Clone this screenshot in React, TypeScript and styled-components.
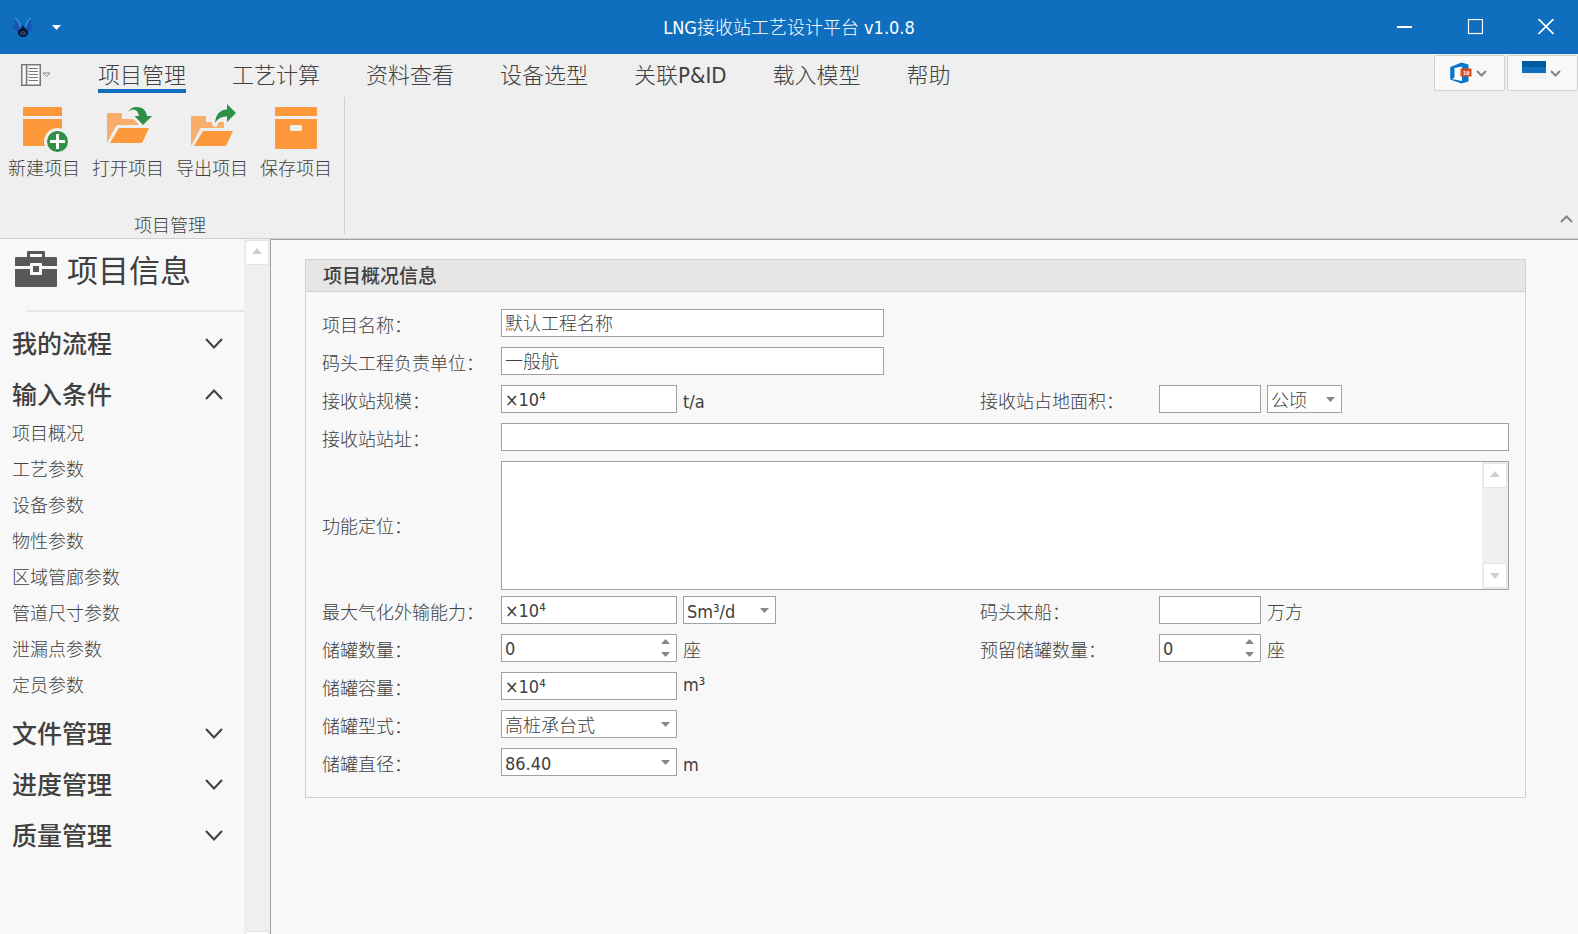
import React, { useState } from "react";
import styled, { createGlobalStyle } from "styled-components";

const color = {
  brand: "#106ebe",
  brandDark: "#005a9e",
  ribbon: "#efefef",
  page: "#f8f8f8",
  line: "#d0d0d0",
  soft: "#e4e4e4",
  field: "#a0a0a0",
  text: "#404040",
  glyph: "#858585",
  orange: "#fd983a",
  paleOrange: "#f8ae6b",
  green: "#2f8f46",
};

const GlobalStyle = createGlobalStyle`
  *, *::before, *::after { box-sizing: border-box; }
  body {
    margin: 0;
    background: ${color.page};
    color: ${color.text};
    font: 300 18px/26px "DejaVu Sans Condensed", "Noto Sans CJK SC", sans-serif;
  }
  button, input, select, textarea { font: inherit; color: inherit; }
  button { padding: 0; border: 0; background: none; cursor: pointer; }
  svg { display: block; flex: none; }
`;

const Window = styled.div`
  display: flex;
  flex-direction: column;
  height: 100vh;
  overflow: hidden;
`;

/* ---------- title bar ---------- */

const TitleBar = styled.header`
  display: grid;
  grid-template-columns: 1fr auto 1fr;
  align-items: center;
  height: 54px;
  flex: none;
  background: ${color.brand};
  color: #fff;
`;

const QuickAccess = styled.div`
  display: flex;
  align-items: center;
  gap: 18px;
  padding-left: 12px;
`;

const WindowTitle = styled.h1`
  margin: 0;
  padding-top: 2px;
  font: inherit;
`;

const WindowButtons = styled.div`
  display: flex;
  justify-content: flex-end;
  gap: 7px;
`;

const WindowButton = styled.button`
  display: grid;
  place-items: center;
  width: 64px;
  height: 54px;
`;

/* ---------- ribbon ---------- */

const Ribbon = styled.section`
  flex: none;
  background: ${color.ribbon};
  border-bottom: 1px solid ${color.line};
`;

const TabRow = styled.div`
  display: flex;
  align-items: flex-start;
  height: 43px;
`;

const FileButton = styled.button`
  display: flex;
  align-items: center;
  gap: 1px;
  height: 42px;
  width: 98px;
  padding-left: 21px;
`;

const Tabs = styled.nav`
  display: flex;
  flex: 1;
  gap: 46px;
`;

const Tab = styled.button<{ $active?: boolean }>`
  height: 39px;
  font-size: 22px;
  line-height: 30px;
  padding-top: 7px;
  display: flex;
  align-items: flex-start;
  border-bottom: 4px solid ${(p) => (p.$active ? color.brand : "transparent")};
`;

const ThemeButtons = styled.div`
  display: flex;
  gap: 2px;
  padding-top: 1px;
`;

const ThemeButton = styled.button`
  display: flex;
  align-items: center;
  justify-content: center;
  gap: 4px;
  width: 71px;
  height: 36px;
  padding-right: 2px;
  border: 1px solid ${color.line};
  border-radius: 2px;
  background: ${color.page};
`;

const RibbonBody = styled.div`
  display: flex;
  justify-content: space-between;
  align-items: flex-end;
  height: 141px;
`;

const RibbonGroup = styled.div`
  display: flex;
  flex-direction: column;
  justify-content: space-between;
  align-self: flex-start;
  height: 137px;
  padding: 7px 6px 0 2px;
  border-right: 1px solid ${color.line};
`;

const Commands = styled.div`
  display: flex;
`;

const Command = styled.button`
  display: flex;
  flex-direction: column;
  align-items: center;
  gap: 4px;
  width: 84px;
`;

const GroupCaption = styled.div`
  text-align: center;
  line-height: 16px;
`;

const CollapseButton = styled.button`
  padding: 0 5px 15px;
`;

/* ---------- body ---------- */

const Body = styled.div`
  display: flex;
  flex: 1;
  min-height: 0;
`;

const Sidebar = styled.aside`
  display: flex;
  width: 270px;
  flex: none;
  overflow: hidden;
`;

const SidebarContent = styled.div`
  flex: 1;
`;

const SidebarHeading = styled.div`
  display: flex;
  align-items: center;
  gap: 10px;
  height: 60px;
  padding-left: 15px;
`;

const SidebarTitle = styled.h2`
  margin: 0;
  padding-top: 4px;
  font-size: 31px;
  line-height: 40px;
  font-weight: 400;
`;

const Divider = styled.hr`
  margin: 11px 0 7px 27px;
  border: 0;
  border-top: 2px solid ${color.soft};
`;

const NavGroup = styled.button`
  display: flex;
  align-items: center;
  justify-content: space-between;
  width: 100%;
  height: 51px;
  padding: 0 21px 0 12px;
  font-size: 25px;
  font-weight: 500;

  svg {
    margin-bottom: 2px;
  }
`;

const NavList = styled.ul`
  margin: 0;
  padding: 0 0 0 12px;
  list-style: none;
`;

const NavItem = styled.li`
  height: 36px;
`;

const NavLink = styled.a`
  color: inherit;
  text-decoration: none;
`;

const ScrollTrack = styled.div<{ $overflow?: boolean }>`
  display: flex;
  flex-direction: column;
  justify-content: space-between;
  flex: none;
  width: 26px;
  padding: 1px;
  background: ${color.ribbon};
  margin-bottom: ${(p) => (p.$overflow ? "-23px" : "0")};
`;

const ScrollButton = styled.button<{ $up?: boolean }>`
  display: grid;
  place-items: center;
  width: 24px;
  height: 25px;
  padding-bottom: ${(p) => (p.$up ? "3px" : "0")};
  border: 1px solid ${color.soft};
  background: #fff;
`;

const Main = styled.main`
  flex: 1;
  min-width: 0;
  padding: 19px 52px 0 34px;
  border: solid ${color.field};
  border-width: 1px 0 0 1px;
`;

const Panel = styled.section`
  border: 1px solid ${color.line};
`;

const PanelTitle = styled.h3`
  margin: 0;
  height: 32px;
  padding: 1px 0 0 17px;
  font-size: 19px;
  line-height: 30px;
  font-weight: 500;
  background: #e6e6e6;
  border-bottom: 1px solid ${color.line};
`;

const Form = styled.form`
  display: grid;
  grid-template-columns: 179px minmax(0, 479fr) 179px minmax(0, 350fr);
  row-gap: 10px;
  padding: 17px 16px 21px;
`;

const Label = styled.label<{ $center?: boolean }>`
  grid-column-start: ${(p) => (p.$center ? 1 : "auto")};
  align-self: ${(p) => (p.$center ? "center" : "start")};
  padding-top: 6px;
  line-height: 22px;
  white-space: nowrap;
`;

const Field = styled.div<{ $span?: boolean }>`
  display: flex;
  gap: 6px;
  grid-column-end: ${(p) => (p.$span ? "-1" : "auto")};
  grid-column-start: ${(p) => (p.$span ? "2" : "auto")};
`;

const Box = styled.div<{ $w?: number }>`
  display: flex;
  flex: ${(p) => (p.$w ? "none" : "1")};
  width: ${(p) => (p.$w ? `${p.$w}px` : "auto")};
  height: 28px;
  position: relative;
  background: #fff;
  border: 1px solid ${color.field};
`;

const TextInput = styled.input`
  flex: 1;
  min-width: 0;
  width: 100%;
  padding: 2px 3px 0;
  border: 0;
  outline: 0;
  background: none;
`;

const SelectInput = styled.select`
  appearance: none;
  flex: 1;
  width: 100%;
  padding: 2px 22px 0 3px;
  border: 0;
  outline: 0;
  background: none;
`;

const SelectArrow = styled.span`
  position: absolute;
  right: 6px;
  top: 11px;
  pointer-events: none;
`;

const Spinner = styled.div`
  display: flex;
  flex-direction: column;
  justify-content: center;
  gap: 8px;
  padding-right: 6px;
`;

const SpinButton = styled.button`
  display: block;
`;

const Unit = styled.span<{ $raised?: boolean }>`
  padding-top: ${(p) => (p.$raised ? "2px" : "6px")};
  line-height: 22px;
`;

const MemoBox = styled.div`
  display: flex;
  flex: 1;
  height: 129px;
  margin-bottom: -4px;
  background: #fff;
  border: 1px solid ${color.field};
`;

const Memo = styled.textarea`
  flex: 1;
  padding: 1px 3px;
  border: 0;
  outline: 0;
  resize: none;
  overflow: hidden;
  background: none;
`;

/* ---------- drawings ---------- */

const Triangle = ({ up, w = 9, h = 5, fill = color.glyph }: { up?: boolean; w?: number; h?: number; fill?: string }) => (
  <svg width={w} height={h} viewBox="0 0 10 5" preserveAspectRatio="none" aria-hidden="true">
    <path d={up ? "M0 5L5 0L10 5Z" : "M0 0H10L5 5Z"} fill={fill} />
  </svg>
);

const Chevron = ({ up, w, h, sw, stroke }: { up?: boolean; w: number; h: number; sw: number; stroke: string }) => (
  <svg width={w} height={h} viewBox={`0 0 ${w} ${h}`} fill="none" stroke={stroke} strokeWidth={sw} aria-hidden="true">
    <path d={up ? `M1 ${h - 1}L${w / 2} 1.5L${w - 1} ${h - 1}` : `M1 1L${w / 2} ${h - 1.5}L${w - 1} 1`} />
  </svg>
);

const Logo = () => (
  <svg width="22" height="22" viewBox="0 0 22 22" aria-hidden="true">
    <path d="M2.500 1Q7 4 8 11L6.500 16Q4 16 3.500 14L1 12Q4 7 2.500 1Z" fill="#1b55b4" />
    <path d="M19.500 1Q15 4 14 11L15.500 16Q18 16 18.500 14L21 12Q18 7 19.500 1Z" fill="#1b55b4" />
    <path d="M3 2Q7.500 5 8 10.500M19 2Q14.500 5 14 10.500" fill="none" stroke="#2f9be6" strokeWidth="1.5" />
    <path d="M11 9Q12 12 14.500 13.500Q17 16 15.500 18.500Q14 21 11 21Q8 21 6.500 18.500Q5 16 7.500 13.500Q10 12 11 9Z" fill="#06112e" />
    <ellipse cx="11" cy="17" rx="3" ry="2" fill="#2a4f70" />
    <ellipse cx="11" cy="17" rx="1.4" ry="1" fill="#16304f" />
  </svg>
);

const FileIcon = () => (
  <svg width="20" height="22" viewBox="0 0 20 22" fill="none" stroke="#777" aria-hidden="true">
    <rect x="0.75" y="0.75" width="18.5" height="20.5" strokeWidth="1.5" fill="#fafafa" />
    <path d="M5.5 1V21" strokeWidth="1.5" />
    <path d="M8 4.5H17M8 7.5H17M8 10.5H17M8 13.5H17M8 16.5H17" strokeWidth="1.2" />
    <path d="M7 3V5M7 6V8M7 9V11M7 12V14M7 15V17" strokeWidth="0.6" />
  </svg>
);

const OfficeIcon = () => (
  <svg width="22" height="22" viewBox="0 0 22 22" aria-hidden="true">
    <path d="M0.500 5L11.500 0.500L18.500 2.500V19.500L11.500 21.500L0.500 17.500L4.500 15.500V5.500L0.500 17.500Z" fill="#0a74c9" />
    <path d="M0.500 5L11.500 3V21L0.500 17.500Z" fill="#0a74c9" />
    <path d="M4.500 6L12 4.500V19L2 17L4.500 15.500Z" fill="#fff" />
    <rect x="10.500" y="6.500" width="11" height="8" fill="#dc4a16" />
    <text x="13" y="13" fontSize="6" fontWeight="700" fill="#fff" fontFamily="Liberation Sans, sans-serif">
      19
    </text>
  </svg>
);

const SchemeIcon = () => (
  <svg width="24" height="24" viewBox="0 0 24 24" aria-hidden="true">
    <path d="M0 0H24V6H0Z" fill={color.brandDark} />
    <path d="M0 6H24V12H0Z" fill={color.brand} />
    <path d="M0 12H24V18H0Z" fill="#f0f0f0" />
  </svg>
);

const NewIcon = () => (
  <svg width="48" height="48" viewBox="0 0 48 48" aria-hidden="true">
    <path d="M4 3H41Q42 3 42 4V12H3V4Q3 3 4 3Z" fill={color.orange} />
    <path d="M3 15H42V42H4Q3 42 3 41Z" fill={color.orange} />
    <circle cx="37.5" cy="37.5" r="13.5" fill={color.ribbon} />
    <circle cx="37.5" cy="37.5" r="10.5" fill={color.green} />
    <path d="M37.5 30V45M30 37.5H45" stroke="#fff" strokeWidth="3" />
  </svg>
);

const OpenIcon = () => (
  <svg width="48" height="48" viewBox="0 0 48 48" aria-hidden="true">
    <path d="M3 38V10Q3 9 4 9H17Q18 9 18 10V15H28.500Q30 15 31 16.500L35 21H14Q12.500 21 12 22L3.500 38Z" fill={color.paleOrange} />
    <path d="M15 24H45L38.500 38Q38 39 37 39H6Z" fill={color.orange} />
    <path d="M24.500 8Q27 3 32 3Q42 3 43 12H48L39 21L30.500 12H35Q34 5.500 29 5.500Q26.500 5.500 24.500 8Z" fill={color.green} />
  </svg>
);

const ExportIcon = () => (
  <svg width="48" height="48" viewBox="0 0 48 48" aria-hidden="true">
    <path d="M3 41V13Q3 12 4 12H17Q18 12 18 13V18H23Q24 18 24 19Q24.500 23 27.500 23Q30 22 30.500 18H35Q36 18 36 19V24H14Q12.500 24 12 25L3.500 41Z" fill={color.paleOrange} />
    <path d="M15 27H45L38.500 41Q38 42 37 42H6Z" fill={color.orange} />
    <path d="M27 19Q28 6 39 5.500V0L48 9L39 18V12.500Q31 12 27 19Z" fill={color.green} />
  </svg>
);

const SaveIcon = () => (
  <svg width="48" height="48" viewBox="0 0 48 48" aria-hidden="true">
    <path d="M4 3H44Q45 3 45 4V12H3V4Q3 3 4 3Z" fill={color.orange} />
    <path d="M3 15H45V44Q45 45 44 45H4Q3 45 3 44ZM18 21V27H30V21Z" fill={color.orange} fillRule="evenodd" />
  </svg>
);

const BriefcaseIcon = () => (
  <svg width="42" height="36" viewBox="0 0 42 36" aria-hidden="true">
    <path
      d="M13 0H29Q30 0 30 1V6H41Q42 6 42 7V15H27V13Q27 12 26 12H16Q15 12 15 13V15H0V7Q0 6 1 6H12V1Q12 0 13 0ZM15 3V6H27V3Z"
      fill="#585856"
      fillRule="evenodd"
    />
    <path d="M0 18H15V23Q15 24 16 24H26Q27 24 27 23V18H42V35Q42 36 41 36H1Q0 36 0 35Z" fill="#585856" />
    <rect x="18" y="15" width="6" height="6" fill="#585856" />
  </svg>
);

/* ---------- form controls ---------- */

const Text = ({ id, w, value = "" }: { id: string; w?: number; value?: string }) => (
  <Box $w={w}>
    <TextInput id={id} type="text" defaultValue={value} />
  </Box>
);

const Select = ({ id, w, options, label }: { id?: string; w: number; options: string[]; label?: string }) => (
  <Box $w={w}>
    <SelectInput id={id} aria-label={label}>
      {options.map((o) => (
        <option key={o}>{o}</option>
      ))}
    </SelectInput>
    <SelectArrow>
      <Triangle />
    </SelectArrow>
  </Box>
);

const Spin = ({ id, w }: { id: string; w: number }) => {
  const [value, setValue] = useState(0);
  return (
    <Box $w={w}>
      <TextInput id={id} inputMode="numeric" value={value} onChange={(e) => setValue(Number(e.target.value) || 0)} />
      <Spinner>
        <SpinButton type="button" aria-label="增加" onClick={() => setValue(value + 1)}>
          <Triangle up />
        </SpinButton>
        <SpinButton type="button" aria-label="减少" onClick={() => setValue(Math.max(0, value - 1))}>
          <Triangle />
        </SpinButton>
      </Spinner>
    </Box>
  );
};

const Scroll = ({ overflow }: { overflow?: boolean }) => (
  <ScrollTrack $overflow={overflow}>
    <ScrollButton $up type="button" aria-label="向上滚动">
      <Triangle up w={10} h={6} fill="#cfcfcf" />
    </ScrollButton>
    <ScrollButton type="button" aria-label="向下滚动">
      <Triangle w={10} h={6} fill="#cfcfcf" />
    </ScrollButton>
  </ScrollTrack>
);

/* ---------- data ---------- */

const tabs = ["项目管理", "工艺计算", "资料查看", "设备选型", "关联P&ID", "载入模型", "帮助"];

const commands = [
  { label: "新建项目", Icon: NewIcon },
  { label: "打开项目", Icon: OpenIcon },
  { label: "导出项目", Icon: ExportIcon },
  { label: "保存项目", Icon: SaveIcon },
];

const groups: { title: string; items?: string[] }[] = [
  { title: "我的流程" },
  {
    title: "输入条件",
    items: ["项目概况", "工艺参数", "设备参数", "物性参数", "区域管廊参数", "管道尺寸参数", "泄漏点参数", "定员参数"],
  },
  { title: "文件管理" },
  { title: "进度管理" },
  { title: "质量管理" },
];

export default function App() {
  const [tab, setTab] = useState(tabs[0]);
  return (
    <Window>
      <GlobalStyle />
      <TitleBar>
        <QuickAccess>
          <Logo />
          <button type="button" aria-label="快速访问">
            <Triangle w={9} h={5} fill="#fff" />
          </button>
        </QuickAccess>
        <WindowTitle>LNG接收站工艺设计平台 v1.0.8</WindowTitle>
        <WindowButtons>
          <WindowButton type="button" aria-label="最小化">
            <svg width="16" height="16" stroke="#fff" strokeWidth="2" aria-hidden="true">
              <path d="M1 8H16" />
            </svg>
          </WindowButton>
          <WindowButton type="button" aria-label="最大化">
            <svg width="16" height="16" stroke="#fff" strokeWidth="1.2" fill="none" aria-hidden="true">
              <rect x="1.5" y="0.500" width="14" height="14" />
            </svg>
          </WindowButton>
          <WindowButton type="button" aria-label="关闭">
            <svg width="16" height="16" stroke="#fff" strokeWidth="1.7" aria-hidden="true">
              <path d="M0.500 0L15.500 15M15.500 0L0.500 15" />
            </svg>
          </WindowButton>
        </WindowButtons>
      </TitleBar>

      <Ribbon>
        <TabRow>
          <FileButton type="button" aria-label="文件">
            <FileIcon />
            <svg width="9" height="6" fill="none" stroke="#858585" aria-hidden="true">
              <path d="M1 1H8L4.500 4.500Z" />
            </svg>
          </FileButton>
          <Tabs>
            {tabs.map((t) => (
              <Tab key={t} type="button" $active={t === tab} onClick={() => setTab(t)}>
                {t}
              </Tab>
            ))}
          </Tabs>
          <ThemeButtons>
            <ThemeButton type="button" aria-label="主题">
              <OfficeIcon />
              <Chevron w={11} h={7} sw={2} stroke={color.glyph} />
            </ThemeButton>
            <ThemeButton type="button" aria-label="配色">
              <SchemeIcon />
              <Chevron w={11} h={7} sw={2} stroke={color.glyph} />
            </ThemeButton>
          </ThemeButtons>
        </TabRow>
        <RibbonBody>
          <RibbonGroup>
            <Commands>
              {commands.map(({ label, Icon }) => (
                <Command key={label} type="button">
                  <Icon />
                  {label}
                </Command>
              ))}
            </Commands>
            <GroupCaption>项目管理</GroupCaption>
          </RibbonGroup>
          <CollapseButton type="button" aria-label="折叠功能区">
            <Chevron up w={13} h={8} sw={2} stroke={color.glyph} />
          </CollapseButton>
        </RibbonBody>
      </Ribbon>

      <Body>
        <Sidebar>
          <SidebarContent>
            <SidebarHeading>
              <BriefcaseIcon />
              <SidebarTitle>项目信息</SidebarTitle>
            </SidebarHeading>
            <Divider />
            {groups.map(({ title, items }) => (
              <React.Fragment key={title}>
                <NavGroup type="button" aria-expanded={!!items}>
                  {title}
                  <Chevron up={!!items} w={18} h={11} sw={2} stroke={color.text} />
                </NavGroup>
                {items && (
                  <NavList>
                    {items.map((item) => (
                      <NavItem key={item}>
                        <NavLink href="#">{item}</NavLink>
                      </NavItem>
                    ))}
                  </NavList>
                )}
              </React.Fragment>
            ))}
          </SidebarContent>
          <Scroll overflow />
        </Sidebar>

        <Main>
          <Panel>
            <PanelTitle>项目概况信息</PanelTitle>
            <Form>
              <Label htmlFor="name">项目名称：</Label>
              <Field $span>
                <Text id="name" w={383} value="默认工程名称" />
              </Field>
              <Label htmlFor="owner">码头工程负责单位：</Label>
              <Field $span>
                <Text id="owner" w={383} value="一般航" />
              </Field>
              <Label htmlFor="scale">接收站规模：</Label>
              <Field>
                <Text id="scale" w={176} value="×10⁴" />
                <Unit>t/a</Unit>
              </Field>
              <Label htmlFor="area">接收站占地面积：</Label>
              <Field>
                <Text id="area" w={102} />
                <Select w={75} options={["公顷"]} label="面积单位" />
              </Field>
              <Label htmlFor="site">接收站站址：</Label>
              <Field $span>
                <Text id="site" />
              </Field>
              <Label htmlFor="role" $center>
                功能定位：
              </Label>
              <Field $span>
                <MemoBox>
                  <Memo id="role" />
                  <Scroll />
                </MemoBox>
              </Field>
              <Label htmlFor="capacity">最大气化外输能力：</Label>
              <Field>
                <Text id="capacity" w={176} value="×10⁴" />
                <Select w={93} options={["Sm³/d"]} label="外输能力单位" />
              </Field>
              <Label htmlFor="ship">码头来船：</Label>
              <Field>
                <Text id="ship" w={102} />
                <Unit>万方</Unit>
              </Field>
              <Label htmlFor="tanks">储罐数量：</Label>
              <Field>
                <Spin id="tanks" w={176} />
                <Unit>座</Unit>
              </Field>
              <Label htmlFor="spare">预留储罐数量：</Label>
              <Field>
                <Spin id="spare" w={102} />
                <Unit>座</Unit>
              </Field>
              <Label htmlFor="volume">储罐容量：</Label>
              <Field $span>
                <Text id="volume" w={176} value="×10⁴" />
                <Unit $raised>m³</Unit>
              </Field>
              <Label htmlFor="type">储罐型式：</Label>
              <Field $span>
                <Select id="type" w={176} options={["高桩承台式"]} />
              </Field>
              <Label htmlFor="diameter">储罐直径：</Label>
              <Field $span>
                <Select id="diameter" w={176} options={["86.40"]} />
                <Unit>m</Unit>
              </Field>
            </Form>
          </Panel>
        </Main>
      </Body>
    </Window>
  );
}
